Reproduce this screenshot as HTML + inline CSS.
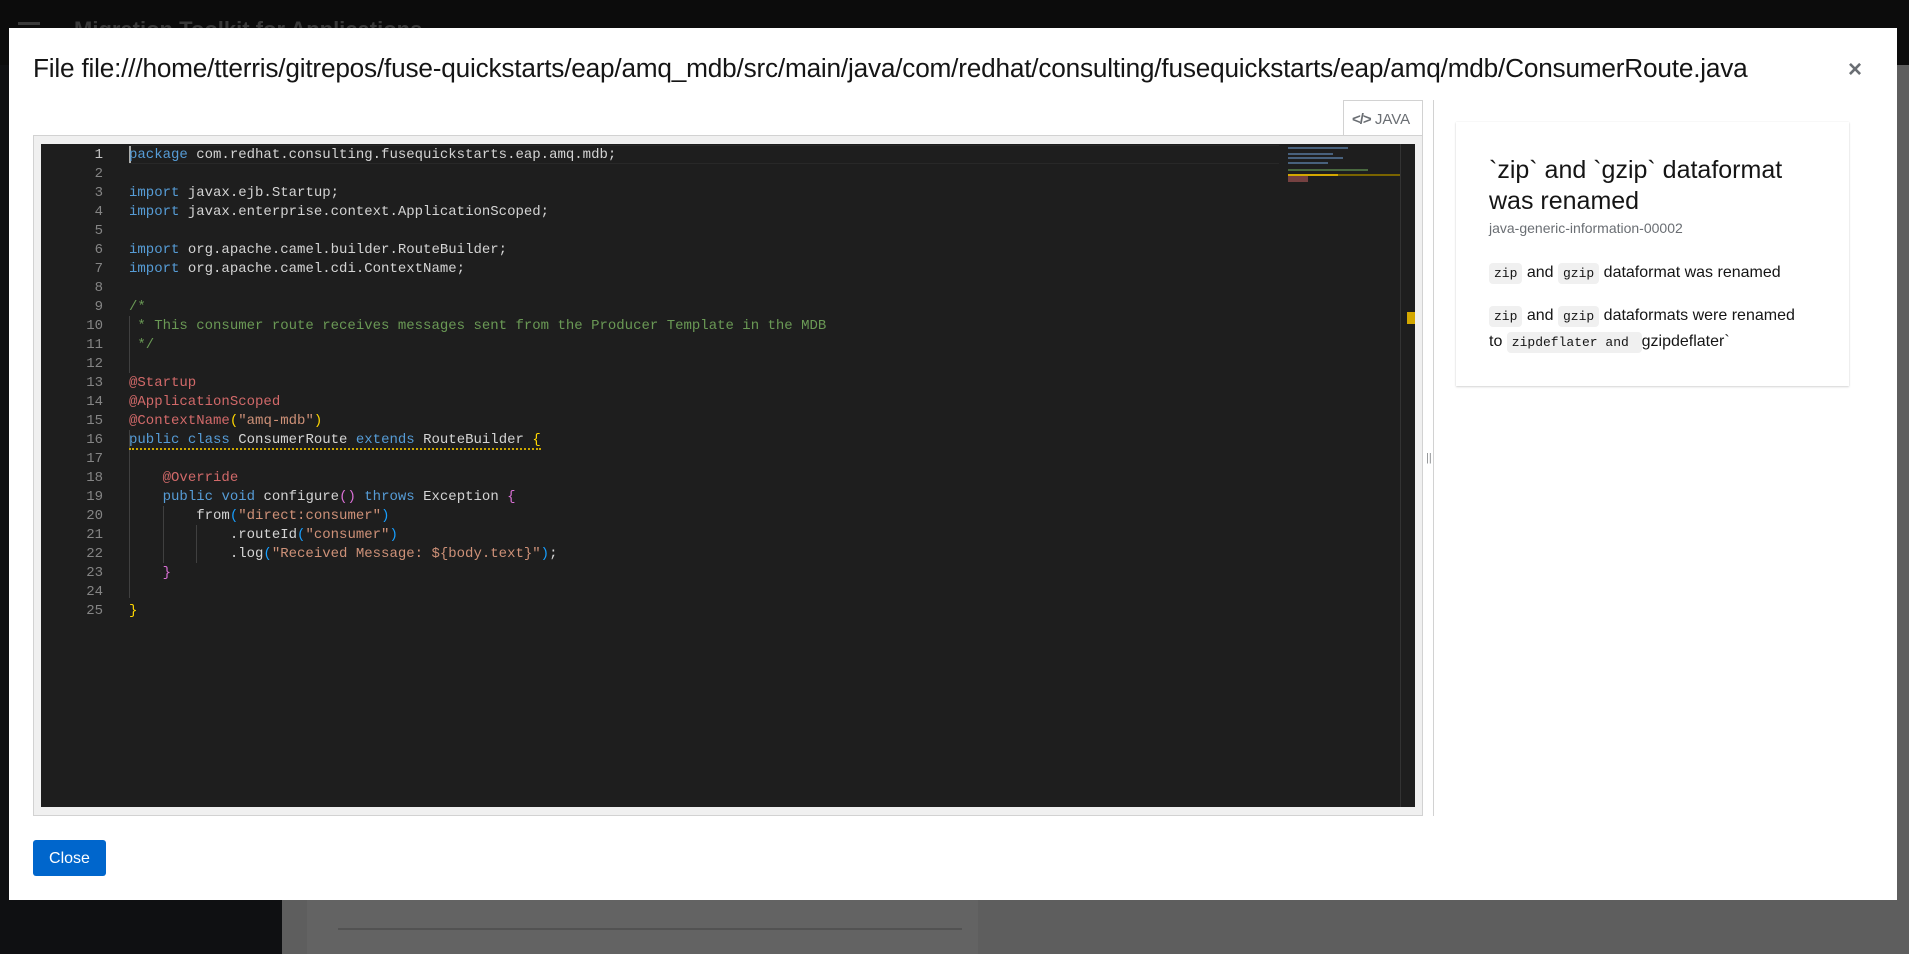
<!DOCTYPE html>
<html><head><meta charset="utf-8"><style>
*{box-sizing:border-box;margin:0;padding:0}
body{width:1909px;height:954px;overflow:hidden;background:#5e5e5e;font-family:"Liberation Sans",sans-serif;position:relative}
.abs{position:absolute}
.mono{font-family:"Liberation Mono",monospace}
.code div{height:19px;line-height:19px;white-space:pre;font-size:14px;color:#d4d4d4}
.ln div{height:19px;line-height:19px;font-size:14px;color:#858585;text-align:right}
.code .k{color:#569cd6}.code .c{color:#6a9955}.code .a{color:#d16969}.code .s{color:#ce9178}.code .y{color:#ffd700}.code .p{color:#da70d6}.code .b{color:#179fff}
.chip{font-family:"Liberation Mono",monospace;font-size:13px;line-height:16px;background:#f0f0f0;border-radius:4px;padding:3px 5px;color:#151515}
</style></head><body>
<div class="abs" style="left:0;top:0;width:1909px;height:65px;background:#0c0c0c"></div>
<div class="abs" style="left:18px;top:22px;width:22px;height:3px;background:#3a3a3a"></div>
<div class="abs" style="left:74px;top:17px;font-size:22px;font-weight:bold;color:#3a3a3a">Migration Toolkit for Applications</div>
<div class="abs" style="left:0;top:65px;width:282px;height:889px;background:#0f1012"></div>
<div class="abs" style="left:307px;top:880px;width:671px;height:74px;background:#636363"></div>
<div class="abs" style="left:338px;top:928px;width:624px;height:2px;background:#525252"></div>

<div class="abs" style="left:9px;top:28px;width:1888px;height:872px;background:#fff"></div>
<div class="abs" style="left:33px;top:53px;font-size:26.2px;color:#151515;white-space:nowrap;letter-spacing:-0.2px">File file:///home/tterris/gitrepos/fuse-quickstarts/eap/amq_mdb/src/main/java/com/redhat/consulting/fusequickstarts/eap/amq/mdb/ConsumerRoute.java</div>
<div class="abs" style="left:1848px;top:56px;font-size:24px;color:#6a6e73;font-weight:bold">×</div>

<div class="abs" style="left:1343px;top:100px;width:80px;height:36px;background:#fff;border:1px solid #d2d2d2;border-bottom:none;font-size:15px;color:#6a6e73;padding:10px 0 0 8px"><span style="font-weight:bold;letter-spacing:-1px">&lt;/&gt;</span> JAVA</div>
<div class="abs" style="left:33px;top:135px;width:1390px;height:681px;background:#f0f0f0;border:1px solid #d2d2d2"></div>
<div class="abs" style="left:41px;top:144px;width:1374px;height:663px;background:#1e1e1e"></div>
<div class="abs" style="left:129px;top:145px;width:1150px;height:19px;border-top:1px solid #282828;border-bottom:1px solid #282828"></div>
<div class="abs" style="left:129px;top:146px;width:2px;height:17px;background:#aeafad"></div>
<div class="abs ln mono" style="left:50px;top:146px;width:53px">
<div style="color:#c6c6c6">1</div><div>2</div><div>3</div><div>4</div><div>5</div><div>6</div><div>7</div><div>8</div><div>9</div><div>10</div><div>11</div><div>12</div><div>13</div><div>14</div><div>15</div><div>16</div><div>17</div><div>18</div><div>19</div><div>20</div><div>21</div><div>22</div><div>23</div><div>24</div><div>25</div></div>
<div class="abs" style="left:129px;top:430px;width:1px;height:168px;background:#404040"></div>
<div class="abs" style="left:163px;top:506px;width:1px;height:57px;background:#404040"></div>
<div class="abs" style="left:196px;top:525px;width:1px;height:38px;background:#404040"></div>
<div class="abs" style="left:129px;top:316px;width:1px;height:57px;background:#404040"></div>
<div class="abs" style="left:129px;top:447px;width:412px;height:3px;border-bottom:2px dotted #cca700"></div>
<div class="abs code mono" style="left:129px;top:146px">
<div><span class="k">package</span> com.redhat.consulting.fusequickstarts.eap.amq.mdb;</div>
<div></div>
<div><span class="k">import</span> javax.ejb.Startup;</div>
<div><span class="k">import</span> javax.enterprise.context.ApplicationScoped;</div>
<div></div>
<div><span class="k">import</span> org.apache.camel.builder.RouteBuilder;</div>
<div><span class="k">import</span> org.apache.camel.cdi.ContextName;</div>
<div></div>
<div><span class="c">/*</span></div>
<div><span class="c"> * This consumer route receives messages sent from the Producer Template in the MDB</span></div>
<div><span class="c"> */</span></div>
<div></div>
<div><span class="a">@Startup</span></div>
<div><span class="a">@ApplicationScoped</span></div>
<div><span class="a">@ContextName</span><span class="y">(</span><span class="s">"amq-mdb"</span><span class="y">)</span></div>
<div><span class="k">public</span> <span class="k">class</span> ConsumerRoute <span class="k">extends</span> RouteBuilder <span class="y">{</span></div>
<div></div>
<div>    <span class="a">@Override</span></div>
<div>    <span class="k">public</span> <span class="k">void</span> configure<span class="p">()</span> <span class="k">throws</span> Exception <span class="p">{</span></div>
<div>        from<span class="b">(</span><span class="s">"direct:consumer"</span><span class="b">)</span></div>
<div>            .routeId<span class="b">(</span><span class="s">"consumer"</span><span class="b">)</span></div>
<div>            .log<span class="b">(</span><span class="s">"Received Message: ${body.text}"</span><span class="b">)</span>;</div>
<div>    <span class="p">}</span></div>
<div></div>
<div><span class="y">}</span></div>
</div>
<div class="abs" style="left:1400px;top:144px;width:1px;height:663px;background:#333"></div>
<div class="abs" style="left:1407px;top:312px;width:8px;height:12px;background:#d4a800"></div>
<div class="abs" style="left:1288px;top:147px;width:90px;height:60px;opacity:.7">
<div style="height:2px;width:60px;background:#5a7ea6;margin-bottom:4px"></div>
<div style="height:2px;width:45px;background:#5a7ea6;margin-bottom:2px"></div>
<div style="height:2px;width:55px;background:#5a7ea6;margin-bottom:3px"></div>
<div style="height:2px;width:40px;background:#5a7ea6;margin-bottom:5px"></div>
<div style="height:2px;width:80px;background:#5c8a4e;margin-bottom:5px"></div>
<div style="height:6px;width:20px;background:#9a5050;margin-bottom:1px"></div>
</div>
<div class="abs" style="left:1288px;top:174px;width:112px;height:2px;background:#7a6400"></div>
<div class="abs" style="left:1288px;top:174px;width:50px;height:2px;background:#d4a800"></div>

<div class="abs" style="left:1433px;top:100px;width:1px;height:716px;background:#d2d2d2"></div>
<div class="abs" style="left:1426px;top:452px;font-size:11px;color:#8a8d90">||</div>

<div class="abs" style="left:1456px;top:122px;width:393px;height:264px;background:#fff;box-shadow:0 1px 2px rgba(0,0,0,.16),0 0 1px rgba(0,0,0,.1)"></div>
<div class="abs" style="left:1489px;top:155px;width:340px;font-size:25px;line-height:31px;color:#151515">`zip` and `gzip` dataformat was renamed</div>
<div class="abs" style="left:1489px;top:220px;font-size:14px;color:#6a6e73">java-generic-information-00002</div>
<div class="abs" style="left:1489px;top:264px;font-size:16px;color:#151515;white-space:nowrap"><span class="chip">zip</span> and <span class="chip">gzip</span> dataformat was renamed</div>
<div class="abs" style="left:1489px;top:303px;font-size:16px;line-height:26px;color:#151515;width:315px"><span class="chip">zip</span> and <span class="chip">gzip</span> dataformats were renamed to <span class="chip">zipdeflater and </span>gzipdeflater`</div>

<div class="abs" style="left:33px;top:840px;width:73px;height:36px;background:#0066cc;border-radius:3px;color:#fff;font-size:16px;text-align:center;line-height:37px">Close</div>
</body></html>
